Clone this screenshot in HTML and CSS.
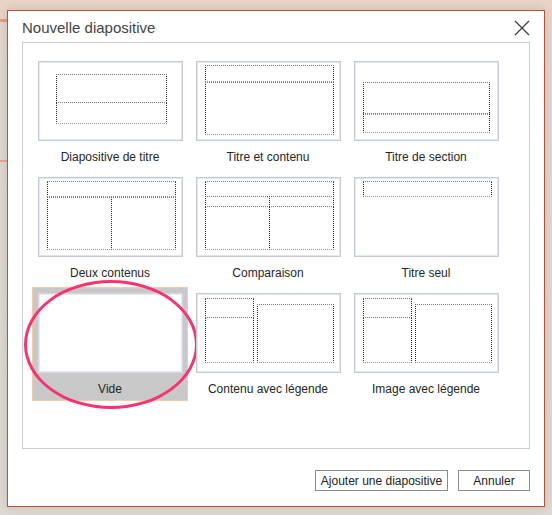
FILE: index.html
```html
<!DOCTYPE html>
<html lang="fr">
<head>
<meta charset="utf-8">
<title>Nouvelle diapositive</title>
<link rel="stylesheet" href="styles.css">
</head>
<body>
<div class="backdrop">
  <div class="dialog">
    <div class="header">
      <h1 class="title">Nouvelle diapositive</h1>
      <svg class="close" width="16" height="16" viewBox="0 0 16 16" aria-label="Fermer">
        <path d="M1 1 L15 15 M15 1 L1 15" stroke="#3a3a3a" stroke-width="1.2" fill="none"/>
      </svg>
    </div>
    <div class="panel">
      <div class="grid">
        <div class="cell">
          <div class="thumb">
            <span class="ph t1-title"></span>
            <span class="ph t1-sub"></span>
          </div>
          <div class="label">Diapositive de titre</div>
        </div>
        <div class="cell">
          <div class="thumb">
            <span class="ph t2-title"></span>
            <span class="ph t2-body"></span>
          </div>
          <div class="label">Titre et contenu</div>
        </div>
        <div class="cell">
          <div class="thumb">
            <span class="ph t3-title"></span>
            <span class="ph t3-sub"></span>
          </div>
          <div class="label">Titre de section</div>
        </div>
        <div class="cell">
          <div class="thumb">
            <span class="ph top-title"></span>
            <span class="ph col-l"></span>
            <span class="ph col-r"></span>
          </div>
          <div class="label">Deux contenus</div>
        </div>
        <div class="cell">
          <div class="thumb">
            <span class="ph top-title"></span>
            <span class="ph hdr-l"></span>
            <span class="ph hdr-r"></span>
            <span class="ph cmp-l"></span>
            <span class="ph cmp-r"></span>
          </div>
          <div class="label">Comparaison</div>
        </div>
        <div class="cell">
          <div class="thumb">
            <span class="ph top-title"></span>
          </div>
          <div class="label">Titre seul</div>
        </div>
        <div class="cell selected">
          <div class="thumb"></div>
          <div class="label">Vide</div>
          <div class="annotation"></div>
        </div>
        <div class="cell">
          <div class="thumb">
            <span class="ph cap-title"></span>
            <span class="ph cap-text"></span>
            <span class="ph cap-main"></span>
          </div>
          <div class="label">Contenu avec légende</div>
        </div>
        <div class="cell">
          <div class="thumb">
            <span class="ph cap-title"></span>
            <span class="ph cap-text"></span>
            <span class="ph cap-main"></span>
          </div>
          <div class="label">Image avec légende</div>
        </div>
      </div>
    </div>
    <div class="footer">
      <button class="btn btn-add">Ajouter une diapositive</button>
      <button class="btn btn-cancel">Annuler</button>
    </div>
  </div>
</div>
</body>
</html>
```

FILE: styles.css
```css
* { box-sizing: border-box; }

html, body {
  margin: 0;
  padding: 0;
}

body {
  width: 552px;
  height: 515px;
  overflow: hidden;
  font-family: "Liberation Sans", Arial, sans-serif;
  background:
    linear-gradient(#e49b7e, #e49b7e) 0 19px / 8px 3px no-repeat,
    linear-gradient(#e7a587, #e7a587) 0 160px / 8px 2px no-repeat,
    linear-gradient(to bottom, #e9d3c8 0, #ddd6d0 60px, #dcd8d4 100%);
}

.backdrop {
  padding: 10px 0 0 7px;
}

.dialog {
  width: 538px;
  height: 497px;
  background: #ffffff;
  border: 1px solid #c0502f;
  box-shadow: 0 0 8px rgba(120, 80, 60, 0.22);
  padding: 0 14px;
  display: flex;
  flex-direction: column;
}

.header {
  height: 31px;
  display: flex;
  justify-content: space-between;
  align-items: flex-start;
}

.title {
  margin: 8px 0 0 0;
  font-size: 15px;
  line-height: 18px;
  font-weight: normal;
  color: #444444;
}

.close {
  margin-top: 9px;
}

.panel {
  height: 407px;
  border: 1px solid #c9cdd3;
  padding: 12px 0 0 9px;
}

.grid {
  display: grid;
  grid-template-columns: repeat(3, 156px);
  grid-auto-rows: 114px;
  gap: 2px;
}

.cell {
  position: relative;
  border: 1px solid transparent;
  padding-top: 5px;
  display: flex;
  flex-direction: column;
  align-items: center;
}

.cell.selected {
  background: #c8c8c8;
  border-color: #f7c9a9;
}

.thumb {
  position: relative;
  width: 145px;
  height: 80px;
  background: #ffffff;
  border: 1px solid #c5cad7;
  box-shadow: inset 0 0 0 1px #e4e7ee;
}

.selected .thumb {
  border-color: #d6dae4;
}

.label {
  margin-top: 9px;
  font-size: 12px;
  line-height: 14px;
  color: #262626;
  white-space: nowrap;
}

/* placeholder boxes on the thumbnail canvas */
.ph {
  position: absolute;
  display: block;
  border: 1px dotted #2a2a2a;
  border-top-color: #7a7a7a;
  border-bottom-color: #999999;
}

.t1-title { left: 17px; top: 12px; width: 111px; height: 29px; }
.t1-sub   { left: 17px; top: 40px; width: 111px; height: 22px; }

.t2-title { left: 8px; top: 3px;  width: 129px; height: 17px; }
.t2-body  { left: 8px; top: 20px; width: 129px; height: 53px; }

.t3-title { left: 8px; top: 20px; width: 127px; height: 33px; }
.t3-sub   { left: 8px; top: 51px; width: 127px; height: 20px; }

.top-title { left: 8px; top: 3px; width: 129px; height: 16px; }
.col-l { left: 8px;  top: 19px; width: 65px; height: 53px; }
.col-r { left: 72px; top: 19px; width: 65px; height: 53px; }

.hdr-l { left: 8px;  top: 18px; width: 65px; height: 11px; }
.hdr-r { left: 72px; top: 18px; width: 65px; height: 11px; }
.cmp-l { left: 8px;  top: 28px; width: 65px; height: 44px; }
.cmp-r { left: 72px; top: 28px; width: 65px; height: 44px; }

.cap-title { left: 8px;  top: 4px;  width: 49px; height: 20px; }
.cap-text  { left: 8px;  top: 23px; width: 49px; height: 46px; }
.cap-main  { left: 60px; top: 10px; width: 77px; height: 59px; }

/* hand-drawn highlight over the selected layout */
.annotation {
  position: absolute;
  left: -9px;
  top: -8px;
  width: 174px;
  height: 129px;
  border: 3px solid #f8336f;
  border-radius: 50%;
  pointer-events: none;
}

.footer {
  margin-top: 21px;
  display: flex;
  justify-content: flex-end;
  gap: 10px;
}

.btn {
  height: 21px;
  padding: 0;
  background: #ffffff;
  border: 1px solid #8c8c8c;
  border-radius: 0;
  font-family: "Liberation Sans", Arial, sans-serif;
  font-size: 12px;
  color: #222222;
}

.btn-add { width: 133px; }
.btn-cancel { width: 72px; }
```
